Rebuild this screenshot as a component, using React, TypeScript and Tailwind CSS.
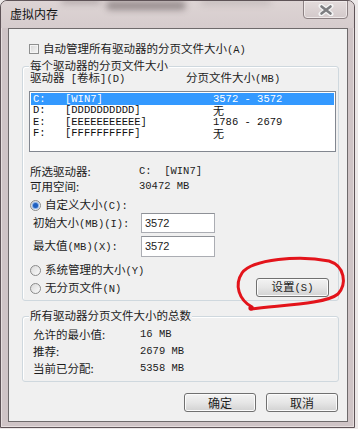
import React from "react";

const A = ({ c }: { c: string }) => (
  <span className="font-['Liberation_Mono',monospace] text-[10.5px] whitespace-pre">{c}</span>
);

const Radio = ({ on }: { on?: boolean }) => (
  <span className="w-[11px] h-[11px] rounded-full border border-[#8a8a8a] bg-linear-to-br from-[#d9d9d9] to-[#fbfbfb] flex items-center justify-center shrink-0">
    {on && <span className="w-[5px] h-[5px] rounded-full bg-[#1f5fbf] shadow-[0_0_1px_1px_#7aa7e6]" />}
  </span>
);

const Btn = ({ children, w }: { children: React.ReactNode; w: string }) => (
  <div
    className={`${w} h-[19px] rounded-[3px] border border-[#707070] bg-linear-to-b from-[#f3f3f3] via-[#e6e6e6] to-[#d2d2d2] shadow-[inset_0_0_0_1px_#fbfbfb] flex items-center justify-center leading-none`}
  >
    {children}
  </div>
);

export default function App() {
  const rows = [
    { d: "C:", l: "[WIN7]", s: "3572 - 3572", sel: true },
    { d: "D:", l: "[DDDDDDDDDD]", s: "无" },
    { d: "E:", l: "[EEEEEEEEEEE]", s: "1786 - 2679" },
    { d: "F:", l: "[FFFFFFFFFF]", s: "无" },
  ];
  return (
    <div className="w-[358px] h-[429px] bg-[#ece8e8] relative font-['Noto_Sans_CJK_SC',sans-serif] text-[11.5px] text-[#1c1c1c]">
      <div className="w-[355px] h-[428px] rounded-t-[7px] border border-[#5e5357] bg-[#cfc4c6] shadow-[inset_0_0_0_1px_#e6dede] overflow-hidden">
        {/* title bar */}
        <div className="relative h-[27px] bg-linear-to-b from-[#ddd4d4] to-[#d6cccd] flex items-start">
          <div className="absolute left-[105px] top-[0px] w-[80px] h-[9px] rounded-full bg-[#6e6466] opacity-60 blur-[3px]" />
          <div className="absolute left-[60px] top-[-3px] w-[40px] h-[6px] rounded-full bg-[#8a8082] opacity-50 blur-[3px]" />
          <div className="absolute left-[200px] top-[-2px] w-[70px] h-[6px] rounded-full bg-[#a39a9b] opacity-40 blur-[3px]" />
          <span className="relative ml-[9px] mt-[6px] text-[12px] leading-[14px] text-[#111]">虚拟内存</span>
          <div className="relative ml-auto mr-[6px] mt-[-1px] w-[45px] h-[19px] rounded-b-[4px] border border-[#8c8183] bg-linear-to-b from-[#e4dcdc] to-[#d3c9ca] shadow-[inset_0_0_0_1px_#efe9e9] flex items-center justify-center">
            <svg width="16" height="12" viewBox="0 0 16 12">
              <path d="M3 2 L13 10 M13 2 L3 10" stroke="#f4f4f4" strokeWidth="5" strokeLinecap="round" />
              <path d="M3.5 2.5 L12.5 9.5 M12.5 2.5 L3.5 9.5" stroke="#7d7d80" strokeWidth="2.6" strokeLinecap="round" />
            </svg>
          </div>
        </div>

        {/* client */}
        <div className="ml-[7px] w-[340px] h-[394px] bg-[#f0f0f0] border border-[#6e6a6b] flex flex-col">
          {/* auto manage checkbox */}
          <div className="mt-[14px] ml-[20px] h-[12px] flex items-center gap-[4px] leading-none">
            <span className="w-[10px] h-[10px] border border-[#8e8f8f] bg-linear-to-br from-[#d6d6d6] to-[#f7f7f7] shadow-[inset_0_0_0_1px_#f4f4f4]" />
            <span>
              自动管理所有驱动器的分页文件大小<A c="(A)" />
            </span>
          </div>

          {/* group 1 */}
          <div className="relative mt-[11px] ml-[13px] w-[317px] h-[235px] rounded-[3px] border border-[#cfd8de] shadow-[inset_1px_1px_0_#ffffff] flex flex-col">
            <span className="absolute left-[6px] top-[-8px] px-[1px] h-[12px] leading-[12px] bg-[#f0f0f0]">
              每个驱动器的分页文件大小
            </span>
            {/* header */}
            <div className="mt-[5px] ml-[7px] h-[12px] flex items-center leading-none">
              <span className="w-[156px]">
                驱动器<A c=" [" />卷标<A c="](D)" />
              </span>
              <span>
                分页文件大小<A c="(MB)" />
              </span>
            </div>
            {/* listbox */}
            <div className="mt-[7px] ml-[6px] w-[307px] h-[61px] border border-[#828790] bg-white pt-[1px] px-[1px] font-['Liberation_Mono','Noto_Sans_CJK_SC',monospace] text-[10.5px]">
              {rows.map((r) => (
                <div
                  key={r.d}
                  className={`h-[11.5px] flex items-center leading-none ${r.sel ? "bg-[#3399ff] text-white" : "text-[#111]"}`}
                >
                  <span className="w-[34px] pl-[2px]">{r.d}</span>
                  <span className="w-[148px]">{r.l}</span>
                  <span className={r.s === "无" ? "font-['Noto_Sans_CJK_SC',sans-serif] text-[11px] leading-[11px]" : ""}>{r.s}</span>
                </div>
              ))}
            </div>
            {/* selected drive info */}
            <div className="mt-[12px] ml-[7px] flex flex-col">
              <div className="h-[15px] flex items-center leading-none">
                <span className="w-[109px]">所选驱动器:</span>
                <A c="C:  [WIN7]" />
              </div>
              <div className="h-[15px] flex items-center leading-none">
                <span className="w-[109px]">可用空间:</span>
                <A c="30472 MB" />
              </div>
            </div>
            {/* custom size */}
            <div className="mt-[5px] ml-[7px] h-[13px] flex items-center gap-[4px] leading-none">
              <Radio on />
              <span>
                自定义大小<A c="(C):" />
              </span>
            </div>
            <div className="mt-[1px] ml-[10px] h-[20px] flex items-center leading-none">
              <span className="w-[108px]">
                初始大小<A c="(MB)(I):" />
              </span>
              <div className="w-[74px] h-[20px] border border-[#abadb3] border-t-[#8e9197] bg-white flex items-center pl-[3px] font-['Liberation_Sans',sans-serif] text-[11px]">
                3572
              </div>
            </div>
            <div className="mt-[3px] ml-[10px] h-[21px] flex items-center leading-none">
              <span className="w-[108px]">
                最大值<A c="(MB)(X):" />
              </span>
              <div className="w-[74px] h-[21px] border border-[#abadb3] border-t-[#8e9197] bg-white flex items-center pl-[3px] font-['Liberation_Sans',sans-serif] text-[11px]">
                3572
              </div>
            </div>
            <div className="mt-[6px] ml-[7px] flex items-start">
              <div className="flex flex-col gap-[4px]">
                <div className="h-[14px] flex items-center gap-[4px] leading-none">
                  <Radio />
                  <span>
                    系统管理的大小<A c="(Y)" />
                  </span>
                </div>
                <div className="h-[14px] flex items-center gap-[4px] leading-none">
                  <Radio />
                  <span>
                    无分页文件<A c="(N)" />
                  </span>
                </div>
              </div>
              <div className="ml-auto mr-[9px] mt-[15px]">
                <Btn w="w-[73px]">
                  <span>
                    设置<A c="(S)" />
                  </span>
                </Btn>
              </div>
            </div>
          </div>

          {/* group 2 */}
          <div className="relative mt-[15px] ml-[13px] w-[317px] h-[66px] rounded-[3px] border border-[#cfd8de] shadow-[inset_1px_1px_0_#ffffff] flex flex-col pt-[9px] pl-[10px]">
            <span className="absolute left-[6px] top-[-8px] px-[1px] h-[12px] leading-[12px] bg-[#f0f0f0]">
              所有驱动器分页文件大小的总数
            </span>
            {[
              ["允许的最小值:", "16 MB"],
              ["推荐:", "2679 MB"],
              ["当前已分配:", "5358 MB"],
            ].map(([k, v]) => (
              <div key={k} className="h-[17px] flex items-center leading-none">
                <span className="w-[107px]">{k}</span>
                <A c={v} />
              </div>
            ))}
          </div>

          {/* bottom buttons */}
          <div className="mt-[11px] mr-[9px] flex justify-end gap-[10px] text-[12px]">
            <Btn w="w-[72px]">确定</Btn>
            <Btn w="w-[72px]">取消</Btn>
          </div>
        </div>
      </div>

      {/* red hand-drawn ellipse */}
      <svg className="absolute inset-0 pointer-events-none" width="358" height="429" viewBox="0 0 358 429">
        <path
          d="M252 307 C239 300, 234 285, 242 273 C252 259, 300 255, 329 261 C345 266, 347 284, 338 294 C326 304, 282 305, 251 309"
          fill="none"
          stroke="#e3141b"
          strokeWidth="3"
          strokeLinecap="round"
        />
        <circle cx="251" cy="308" r="2.6" fill="#d8101a" />
      </svg>
    </div>
  );
}
